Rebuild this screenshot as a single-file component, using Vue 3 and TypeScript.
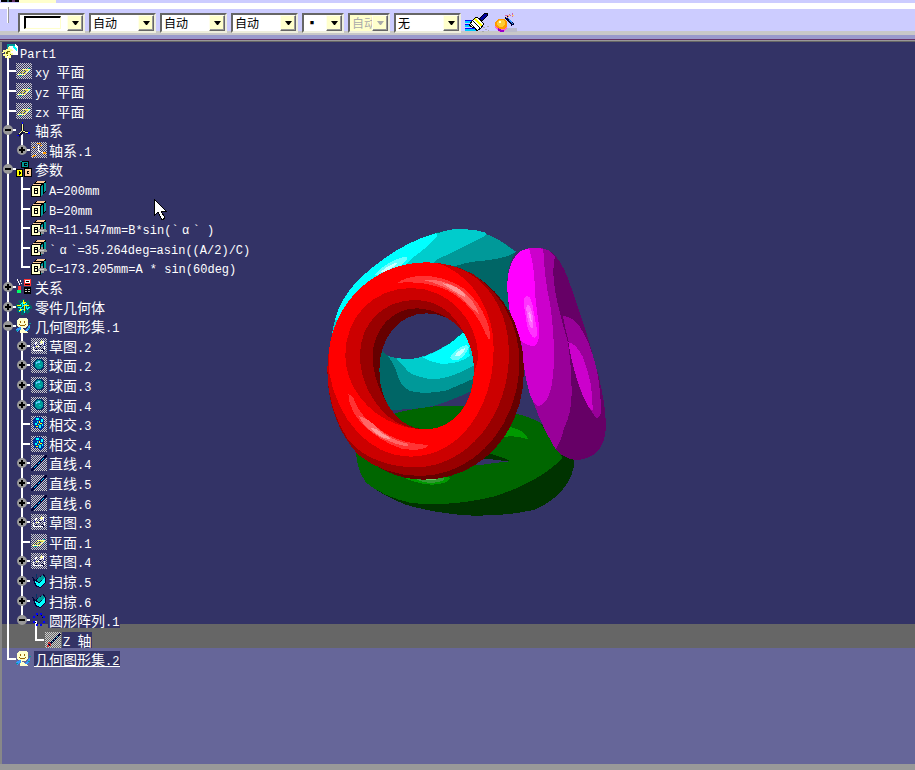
<script setup lang="ts">
interface Shape {
  d: string
  fill?: string
  stroke?: string
  w?: number
}
interface Node {
  depth: number
  icon: string
  text: string
  knob?: 'plus' | 'minus'
  mark?: 'plate' | 'active'
}
interface Combo {
  label: string
  value: string
  kind: 'wide' | 'narrow'
  preview?: boolean
  disabled?: boolean
}

const combos: Combo[] = [
  { label: '填充颜色', value: '', kind: 'wide', preview: true },
  { label: '透明度', value: '自动', kind: 'wide' },
  { label: '线宽', value: '自动', kind: 'wide' },
  { label: '线型', value: '自动', kind: 'wide' },
  { label: '点符号', value: '▪', kind: 'narrow' },
  { label: '渲染样式', value: '自动', kind: 'narrow', disabled: true },
  { label: '图层', value: '无', kind: 'wide' },
]

const nodes: Node[] = [
  { depth: 0, icon: 'part', text: 'Part1' },
  { depth: 1, icon: 'plane', text: 'xy 平面' },
  { depth: 1, icon: 'plane', text: 'yz 平面' },
  { depth: 1, icon: 'plane', text: 'zx 平面' },
  { depth: 1, icon: 'axes', text: '轴系', knob: 'minus' },
  { depth: 2, icon: 'axis', text: '轴系.1', knob: 'plus' },
  { depth: 1, icon: 'params', text: '参数', knob: 'minus' },
  { depth: 2, icon: 'param', text: 'A=200mm' },
  { depth: 2, icon: 'param', text: 'B=20mm' },
  { depth: 2, icon: 'formula', text: 'R=11.547mm=B*sin(`α` )' },
  { depth: 2, icon: 'formula', text: '`α`=35.264deg=asin((A/2)/C)' },
  { depth: 2, icon: 'formula', text: 'C=173.205mm=A * sin(60deg)' },
  { depth: 1, icon: 'relations', text: '关系', knob: 'plus' },
  { depth: 1, icon: 'body', text: '零件几何体', knob: 'plus' },
  { depth: 1, icon: 'set', text: '几何图形集.1', knob: 'minus' },
  { depth: 2, icon: 'sketch', text: '草图.2', knob: 'plus' },
  { depth: 2, icon: 'sphere', text: '球面.2', knob: 'plus' },
  { depth: 2, icon: 'sphere', text: '球面.3', knob: 'plus' },
  { depth: 2, icon: 'sphere', text: '球面.4', knob: 'plus' },
  { depth: 2, icon: 'intersect', text: '相交.3' },
  { depth: 2, icon: 'intersect', text: '相交.4' },
  { depth: 2, icon: 'line', text: '直线.4', knob: 'plus' },
  { depth: 2, icon: 'line', text: '直线.5', knob: 'plus' },
  { depth: 2, icon: 'line', text: '直线.6', knob: 'plus' },
  { depth: 2, icon: 'sketch', text: '草图.3', knob: 'plus' },
  { depth: 2, icon: 'plane', text: '平面.1' },
  { depth: 2, icon: 'sketch', text: '草图.4', knob: 'plus' },
  { depth: 2, icon: 'sweep', text: '扫掠.5', knob: 'plus' },
  { depth: 2, icon: 'sweep', text: '扫掠.6', knob: 'plus' },
  { depth: 2, icon: 'pattern', text: '圆形阵列.1', knob: 'minus', mark: 'plate' },
  { depth: 3, icon: 'zaxis', text: 'Z 轴', mark: 'plate' },
  { depth: 1, icon: 'set', text: '几何图形集.2', mark: 'active' },
]

function guides(index: number): string[] {
  const depth = nodes[index].depth
  const out: string[] = []
  for (let level = 1; level <= depth; level++) {
    const next = nodes.slice(index + 1).find((n) => n.depth <= level)
    const goesOn = next !== undefined && next.depth === level
    if (level === depth) out.push(goesOn ? 'tee' : 'elbow')
    else out.push(goesOn ? 'line' : 'blank')
  }
  return out
}

function hasChildren(index: number): boolean {
  return index + 1 < nodes.length && nodes[index + 1].depth > nodes[index].depth
}

// Splits a label into half-width, full-width Greek and Han runs.
function runs(text: string): { kind: string; text: string }[] {
  return (text.match(/[\u4e00-\u9fff]+|α|[^\u4e00-\u9fffα]+/g) ?? []).map((t) => ({
    text: t,
    kind: t === 'α' ? 'greek' : /[\u4e00-\u9fff]/.test(t) ? 'han' : 'latin',
  }))
}

const hatched = new Set(['plane', 'axis', 'sketch', 'sphere', 'intersect', 'line', 'zaxis'])

const cube: Shape[] = [
  { d: 'M0 5L5 0H15V10L10 16H0Z', fill: '#000' },
  { d: 'M1 4H9L10 3H2ZM4 2H12L13 1H5Z', fill: '#fc9' },
  { d: 'M10 5L12 3V13L10 15ZM13 2H15V9L13 11Z', fill: '#099' },
  { d: 'M2 3H10V4H2ZM6 0H14V1H6Z', fill: '#fc9' },
  { d: 'M1 5H9V15H1Z', fill: '#ffc' },
  { d: 'M3 7H7V8H4V9H6V10H4V12H7V13H3ZM6 8H7V12H6Z', fill: '#000' },
]

const icons: Record<string, Shape[]> = {
  part: [
    { d: 'M6 0H14L16 3V11H6Z', fill: '#fff' },
    { d: 'M5 0H13V2H7V5H5Z', fill: '#099' },
    { d: 'M12 1L15 5V7L10 3Z', fill: '#0ff' },
    { d: 'M4 5H6V3H8V5H10L11 7H9V9H11V11H9V14H7V12H5V14H3V12H1V10H3V8H1V6H4Z', fill: '#ff9' },
    { d: 'M4 8H5V7H8V8H6V10H4ZM8 10H9V11H6V12H5V11H8Z', fill: '#660' },
    { d: 'M0 8H2V9H0ZM6 13H7V15H6Z', fill: '#ff9' },
  ],
  plane: [
    { d: 'M2 11L7 6H14L9 11Z', stroke: '#ff9', w: 1 },
    { d: 'M5 9H7V10H5ZM9 7H12V8H9ZM8 10H10V11H8ZM7 8H9V9H7Z', fill: '#cc3' },
    { d: 'M12 5H14V6H12ZM3 12H6V13H3ZM13 8H14V9H13Z', fill: '#099' },
  ],
  axes: [
    { d: 'M5 2H8V8L13 10V12L7 11L3 15L1 13L5 9Z', fill: '#113' },
    { d: 'M6 2H7V9H6ZM7 9H9V10H7ZM9 10H12V11H9ZM5 9H6V10H5ZM4 10H5V11H4ZM3 11H4V12H3Z', fill: '#ff9' },
    { d: 'M6 0H7V2H6ZM12 10H14V12H12ZM1 13H3V14H1Z', fill: '#00f' },
  ],
  axis: [
    { d: 'M7 3H8V9H7ZM8 9H10V10H8ZM10 10H13V11H10ZM6 10H7V11H6ZM5 11H6V12H5ZM4 12H5V13H4Z', fill: '#fff' },
    { d: 'M6 1H10V2H6ZM9 3H11V4H9ZM2 5H4V6H2ZM12 10H15V12H12ZM2 13H5V14H2ZM1 14H3V15H1Z', fill: '#f90' },
  ],
  params: [
    { d: 'M5 0H13V7H5ZM0 8H7V16H0ZM8 7H16V16H8Z', fill: '#000' },
    { d: 'M6 1H12V6H6ZM4 0H6V1H4Z', fill: '#099' },
    { d: 'M1 9H6V15H1Z', fill: '#ff0' },
    { d: 'M9 8H15V15H9Z', fill: '#fc9' },
    { d: 'M8 2H11V3H9V4H11V5H8ZM3 10H4V11H5V13H4V14H3ZM11 10H13V11H12V12H13V13H11Z', fill: '#000' },
  ],
  param: cube,
  formula: [
    ...cube,
    { d: 'M6 11L8 9H10V7H12V9H14L16 10V12H13V14H10V12H7Z', fill: '#999' },
    { d: 'M8 10H13V11H8Z', fill: '#ccc' },
  ],
  relations: [
    { d: 'M8 0H15V7H8Z', fill: '#f33' },
    { d: 'M9 1H14V4H9Z', fill: '#fff' },
    { d: 'M10 2H13V3H10ZM9 5H14V6H9Z', fill: '#000' },
    { d: 'M8 8H15V15H8Z', fill: '#000' },
    { d: 'M9 10H11V11H9ZM12 10H14V11H12ZM9 12H11V13H9ZM12 12H14V13H12Z', fill: '#ccc' },
    { d: 'M1 0H2V2H1ZM2 2H3V4H2ZM4 1H5V3H4ZM3 4H4V6H3ZM5 4H6V5H5Z', fill: '#fff' },
    { d: 'M2 7H5V11H2Z', fill: '#f33' },
    { d: 'M1 11H5V14H1Z', fill: '#0f6' },
  ],
  body: [
    { d: 'M6 0H9V3L13 1L14 4L12 5L16 7V10L12 10L14 13L11 15L9 12L8 16H5V12L2 14L1 11L3 10L0 8V5L4 5L2 2L4 1L6 3Z', fill: '#066' },
    { d: 'M4 6L7 3L6 8L10 5V10L14 8L11 11M2 8H5L4 12L8 10V14', stroke: '#0ff', w: 1 },
    { d: 'M7 1V5L10 3M1 6L5 7M9 12L8 7L13 6M3 12L6 10', stroke: '#ff0', w: 1 },
  ],
  set: [
    { d: 'M1 2L4 0H10L12 2V8L9 10H4L1 8Z', fill: '#ffc' },
    { d: 'M4 3H5V5H4ZM8 3H9V5H8ZM4 7H9V8H4ZM3 6H4V7H3ZM9 6H10V7H9Z', fill: '#960' },
    { d: 'M0 11L4 9L7 12H10L14 6V10L11 14H7L4 12L1 14Z', fill: '#39f' },
    { d: 'M5 10L12 14V15H4Z', fill: '#ffc' },
    { d: 'M0 12H2V13H0ZM12 10H14V11H12ZM13 5H15V6H13Z', fill: '#099' },
  ],
  sketch: [
    { d: 'M2 12L5 4L8 9L12 3L14 11L9 13Z', stroke: '#fff', w: 1 },
    { d: 'M8 7H10V8H8ZM4 11H6V12H4ZM10 11H13V13H12V12H10Z', fill: '#003' },
    { d: 'M9 4H12V5H9ZM5 8H7V9H5ZM10 2H11V4H10Z', fill: '#ff9' },
    { d: 'M13 4H14V8H13ZM3 6H4V9H3Z', fill: '#339' },
  ],
  sphere: [
    { d: 'M5 2H10L13 5V10L10 13H5L2 10V5Z', fill: '#036' },
    { d: 'M6 3H10L12 6V9L9 12H6L4 9V5Z', fill: '#099' },
    { d: 'M5 5H7V4H9V6H6V7H5Z', fill: '#6cf' },
    { d: 'M8 8H10V9H8Z', fill: '#0cc' },
  ],
  intersect: [
    { d: 'M4 1H11L13 4V11L10 15L7 12H3L2 5Z', fill: '#039' },
    { d: 'M5 2H8V4H5ZM10 3H12V6H10ZM4 7H6V9H4ZM8 9H10V12H8ZM6 5H7V7H6ZM11 8H12V10H11Z', fill: '#0ff' },
    { d: 'M8 5H9V7H8ZM9 7H11V8H9ZM5 10H7V11H5ZM7 8H8V9H7Z', fill: '#ff0' },
  ],
  line: [
    { d: 'M0 16L16 0', stroke: '#003', w: 2 },
    { d: 'M3 12H4V13H3ZM4 11H5V12H4ZM5 10H6V11H5ZM7 8H8V9H7ZM8 7H9V8H8ZM10 5H11V6H10ZM11 4H12V5H11ZM12 3H13V4H12Z', fill: '#0cf' },
  ],
  sweep: [
    { d: 'M1 4L4 7L13 1L15 5V9L9 15L4 13L3 9Z', fill: '#003' },
    { d: 'M5 7L12 2L14 5L8 9Z', fill: '#099' },
    { d: 'M4 8L8 10L14 5V9L9 14L5 12Z', fill: '#0ff' },
    { d: 'M5 1H6V5H5ZM2 4H3V5H2Z', fill: '#036' },
  ],
  pattern: [
    { d: 'M5 1H7V3H5ZM9 1H11V3H9ZM12 4H14V6H12ZM12 9H14V11H12ZM9 12H11V14H9ZM5 12H7V14H5ZM2 9H4V11H2ZM2 4H4V6H2Z', fill: '#00f' },
    { d: 'M6 3H7V4H6ZM10 3H11V4H10ZM11 5H12V6H11ZM4 10H5V11H4ZM6 11H7V12H6Z', fill: '#003' },
  ],
  zaxis: [
    { d: 'M3 14L15 2', stroke: '#003', w: 2 },
    { d: 'M7 9H8V10H7ZM9 7H10V8H9ZM11 5H12V6H11ZM12 4H13V5H12Z', fill: '#6cc' },
    { d: 'M2 13H4V15H2ZM3 10H5V12H3ZM5 11H6V14H5Z', fill: '#c33' },
  ],
}
</script>

<template>
  <main class="page">
    <header>
      <div class="strip"><span class="fragment"></span><span class="tab"></span></div>
      <div class="seam"></div>
      <div class="toolbar">
        <span class="grip"></span>
        <label v-for="c in combos" :key="c.label" class="combo" :class="[c.kind, { off: c.disabled }]">
          <select :aria-label="c.label" :disabled="c.disabled">
            <option>{{ c.value }}</option>
          </select>
          <span v-if="c.preview" class="preview"></span>
          <span class="drop">
            <svg width="7" height="4" viewBox="0 0 7 4"><path d="M0 0H7L4 4H3Z" fill="currentColor" /></svg>
          </span>
        </label>
        <button class="tool" type="button" aria-label="格式刷">
          <svg width="26" height="20" viewBox="0 0 26 20" shape-rendering="crispEdges">
            <path d="M0 7H10M0 11H8M0 15H12" stroke="#00f" stroke-width="1" />
            <path d="M0 9H9M0 13H9M0 17H13" stroke="#0cf" stroke-width="2" />
            <path d="M4 12L8 7L12 4L19 11L16 15L12 18L10 15L7 14Z" fill="#fff" stroke="#000" />
            <path d="M6 11L12 17M8 8L15 15" stroke="#000" />
            <path d="M10 6L17 13" stroke="#ff0" stroke-width="2" />
            <path d="M14 6L20 0H22V3L17 8Z" fill="#009" stroke="#000" />
            <path d="M18 14H20M22 13H24M20 16H22M17 18H19M23 17H24" stroke="#aaa" />
          </svg>
        </button>
        <button class="tool" type="button" aria-label="图形属性向导">
          <svg width="22" height="20" viewBox="0 0 22 20" shape-rendering="crispEdges">
            <path d="M12 15H22V19H8V17Z" fill="#bbc" />
            <path d="M3 7H8L12 10V15L8 19H4L0 15V10Z" fill="#f6c" />
            <path d="M3 6H9L12 9V13L9 16H3L0 13V9Z" fill="#f90" />
            <path d="M4 7H8L10 9V12L7 14H4L2 12V9Z" fill="#fc3" />
            <path d="M4 8H6V10H4Z" fill="#ffc" />
            <path d="M3 16L6 18H9" stroke="#90c" stroke-width="2" fill="none" />
            <path d="M11 4L18 12" stroke="#003" stroke-width="3" />
            <path d="M13 5L18 11" stroke="#39f" />
            <path d="M10 2H13M14 1L16 3M17 0V4M12 5L14 3" stroke="#c6a" />
            <path d="M13 2H15M17 2H19M11 4H12" stroke="#fc6" />
          </svg>
        </button>
      </div>
      <div class="edge"></div>
    </header>

    <section class="viewport">
      <svg class="scene" viewBox="2 42 913 722" preserveAspectRatio="xMinYMin meet" shape-rendering="crispEdges">
        <!-- back torus -->
        <g transform="translate(320 220) scale(0.333333)">
          <path fill="#066" d="M33 380Q35 335 45 300Q60 240 110 185Q165 130 240 85Q300 52 350 38Q400 27 440 28Q490 32 540 62Q570 80 588 95Q562 130 562 190L580 300L470 506Q400 540 340 558Q280 570 213 569L100 480Z" />
          <path fill="#099" d="M300 60L440 28Q490 32 540 62L588 95Q570 112 500 121Q450 124 410 137L320 135Z" />
          <path fill="#0cc" d="M33 380Q35 335 45 300L300 60Q350 36 400 28L440 28Q470 29 498 38Q500 44 492 49Q450 73 350 119L340 132L200 220Z" />
          <path fill="#0ff" d="M45 300Q60 240 110 185Q165 130 240 85Q300 52 348 40Q353 43 350 51Q330 75 285 108L250 140L100 260Q65 300 48 302Z" />
          <path fill="#6ff" d="M162 166Q190 132 240 114Q262 108 262 116L245 135L180 165Z" />
          <path fill="#cff" d="M182 156Q205 135 232 127L225 138L190 158Z" />
          <path fill="#099" d="M204 408Q225 435 234 470Q242 498 270 513Q320 525 380 511L480 468V360L340 380Z" />
          <path fill="#0cc" d="M228 416Q250 435 265 455Q290 473 340 478Q400 475 480 426V350Z" />
          <path fill="#0ff" d="M308 412Q390 380 430 335L480 340L465 372Q440 372 450 408Q420 430 370 432Q335 428 308 412Z" />
          <path fill="#6ff" d="M390 412Q402 388 440 374L446 382Q438 405 415 420Q395 424 390 412Z" />
          <path fill="#cff" d="M405 407Q410 394 436 383Q434 398 418 407Z" />
          <path fill="#336" d="M190 396L205 408Q240 420 290 415Q345 400 390 368Q425 342 450 310V220H220L150 350Z" />
        </g>
        <!-- lower torus -->
        <g transform="translate(340 390) scale(0.333333)">
          <path fill="#030" d="M48 180C48 225 60 250 78 278Q130 318 200 345Q300 373 400 377Q500 378 580 360Q640 337 675 290Q705 250 702 205L600 97Q560 76 500 65Q400 45 330 47Q240 48 150 74Q80 110 48 180Z" />
          <path fill="#060" d="M48 160V180C48 225 60 250 78 278Q130 320 210 338Q260 345 310 342Q390 337 460 320Q540 295 600 258Q645 230 668 202L600 97Q560 76 500 65Q400 45 330 47Q240 48 150 74Q80 110 48 160Z" />
          <path fill="#030" d="M430 187Q475 195 512 214L420 206Z" />
          <path fill="#336" d="M395 226L430 206Q470 208 506 215Q460 218 440 223Z" />
          <path fill="#090" d="M495 108Q555 118 565 149Q530 134 480 142Z" />
          <path fill="#090" d="M175 255Q220 280 275 284Q325 282 330 263L280 255Z" />
          <path fill="#393" d="M220 262Q240 277 275 279Q310 276 315 266L280 255Z" />
          <path fill="#6c6" d="M235 265Q265 276 290 268V255Z" />
        </g>
        <!-- right torus -->
        <g transform="translate(480 230) scale(0.333333)">
          <path fill="#606" d="M82 180Q80 100 118 66Q160 42 205 61Q235 75 262 140Q320 300 345 400Q380 520 377 600Q370 682 295 690Q250 690 222 650Q170 560 145 470Q130 410 125 345Q100 280 88 240Q83 210 82 180Z" />
          <path fill="#909" d="M82 180Q80 100 118 66Q160 42 205 61L225 80Q215 120 225 180Q235 240 262 330Q275 400 275 490Q275 550 252 595Q248 620 228 658L222 650Q170 560 145 470Q130 410 125 345L88 240Z" />
          <path fill="#c0c" d="M82 180Q80 100 118 66Q155 46 190 57Q194 150 210 220Q222 300 222 380Q220 520 176 528Q155 526 140 455Q130 410 125 345L88 240Z" />
          <path fill="#f0f" d="M82 180Q80 100 118 66Q130 55 148 58Q164 110 165 190Q170 240 178 295Q178 348 160 348Q140 348 120 330L88 240Z" />
          <path fill="#f3f" d="M132 225Q130 198 142 198Q155 200 160 240L171 300Q174 323 162 323Q150 318 141 285Z" />
          <path fill="#f6f" d="M139 240Q138 224 147 226Q157 240 160 275Q162 298 154 294Q143 280 139 240Z" />
          <path fill="#f9f" d="M145 249Q150 240 154 265L155 276Q148 270 145 249Z" />
          <path fill="#909" d="M249 258Q275 260 295 283Q330 335 348 410Q362 470 363 545Q360 565 348 563Q325 535 300 475Q280 400 266 335Q256 300 249 258Z" />
          <path fill="#c0c" d="M265 337Q288 340 308 380Q340 460 338 540Q330 545 310 500Q280 430 265 337Z" />
        </g>
        <!-- front torus -->
        <g transform="translate(320 220) scale(0.333333)">
          <path fill="#600" fill-rule="evenodd" d="M22 450C22 265 155 127 320 127C490 127 612 270 612 450C612 640 480 779 310 779C145 779 22 625 22 450ZM178 450C178 550 235 628 318 628C400 628 462 550 462 450C462 355 410 280 320 280C235 280 178 355 178 450Z" />
          <path fill="#900" fill-rule="evenodd" d="M22 450C22 265 155 127 320 127C370 127 420 140 460 163C540 215 598 310 598 425C598 620 460 768 300 768C230 768 165 745 115 705C55 640 22 550 22 450ZM158 410C158 330 215 265 290 265C345 265 400 300 430 335C450 370 462 405 462 450C462 550 400 628 318 628C245 628 210 570 185 520C170 490 158 450 158 410Z" />
          <path fill="#c00" fill-rule="evenodd" d="M22 450C22 265 155 127 320 127C370 127 410 140 440 155C520 200 567 290 567 400C567 590 440 742 285 742C210 742 130 715 85 660C45 600 22 530 22 450ZM120 405C120 310 190 240 285 240C370 240 415 300 440 355C458 390 462 420 462 450C462 550 400 628 318 628C275 628 238 617 205 590C155 545 120 480 120 405Z" />
          <path fill="#f00" fill-rule="evenodd" d="M26 400C40 245 165 127 320 127C345 127 365 132 380 140C460 180 521 270 521 385C521 570 415 710 270 710C150 710 50 600 26 450ZM76 405C76 290 160 204 275 204C385 204 475 300 475 415L462 460C458 555 400 628 318 628C180 628 76 520 76 405Z" />
          <path fill="#f33" d="M231 189Q260 169 310 167Q380 170 430 205Q475 240 500 300Q514 340 508 361Q500 350 480 305Q440 240 380 210Q310 180 231 189Z" />
          <path fill="#f66" d="M304 179Q370 175 420 208Q465 240 478 285Q455 264 435 243Q380 193 304 179Z" />
          <path fill="#f99" d="M368 190Q400 194 418 208Q438 220 436 231Q405 217 368 190Z" />
          <path fill="#f33" d="M85 522Q88 570 125 610Q180 665 245 686Q310 696 327 675Q230 670 175 625Q115 585 100 532Z" />
          <path fill="#f66" d="M117 588Q130 625 190 656Q230 675 263 679L264 671Q215 662 178 629Q145 595 117 588Z" />
          <path fill="#f99" d="M152 623Q170 624 188 642Q205 648 211 657Q175 655 152 623Z" />
        </g>
        <path d="M154 199V216L158 212L162 220L165 218L161 211H166Z" fill="#fff" stroke="#000" stroke-width="1" />
      </svg>

      <svg class="defs" aria-hidden="true">
        <defs>
          <pattern id="hatch" width="2" height="2" patternUnits="userSpaceOnUse">
            <path d="M0 0H1V1H0ZM1 1H2V2H1Z" fill="#ccc" />
          </pattern>
        </defs>
      </svg>

      <ul class="tree" role="tree">
        <li v-for="(n, i) in nodes" :key="i" class="node" role="treeitem" :aria-level="n.depth + 1">
          <span v-for="(g, k) in guides(i)" :key="k" class="guide" :class="g">
            <svg v-if="n.knob && k === n.depth - 1" class="knob" width="10" height="10" viewBox="0 0 10 10">
              <circle cx="5" cy="5" r="5" fill="#999" />
              <path d="M2 5H8" stroke="#000" stroke-width="2" />
              <path v-if="n.knob === 'plus'" d="M5 2V8" stroke="#000" stroke-width="2" />
            </svg>
          </span>
          <span class="picture" :class="{ parent: hasChildren(i), root: n.depth === 0, deep: n.depth > 1 }">
            <svg width="16" height="16" viewBox="0 0 16 16" shape-rendering="crispEdges">
              <rect v-if="hatched.has(n.icon)" width="16" height="16" fill="url(#hatch)" />
              <path
                v-for="(s, k) in icons[n.icon]"
                :key="k"
                :d="s.d"
                :fill="s.fill ?? 'none'"
                :stroke="s.stroke ?? 'none'"
                :stroke-width="s.w ?? 0"
              />
            </svg>
          </span>
          <span class="label" :class="n.mark">
            <span v-for="(r, k) in runs(n.text)" :key="k" :class="r.kind">{{ r.text }}</span>
          </span>
        </li>
      </ul>
    </section>
    <footer class="sill"></footer>
  </main>
</template>

<style>
body {
  margin: 0;
}
</style>

<style scoped>
.page {
  display: flex;
  flex-direction: column;
  min-height: 100vh;
  font-family: "Liberation Mono", "Noto Sans CJK SC", monospace;
}
.strip {
  display: flex;
  height: 3px;
  background: #ccf;
}
.fragment {
  width: 18px;
  margin-left: 1px;
  background: linear-gradient(90deg, #000 6px, #366 6px 8px, #000 8px 11px, #636 11px 14px, #000 14px);
  height: 2px;
}
.tab {
  width: 37px;
  background: #ffc;
}
.seam {
  height: 6px;
  background: #fff;
}
.toolbar {
  display: flex;
  align-items: flex-start;
  gap: 4px;
  height: 22px;
  padding-top: 4px;
  background: linear-gradient(#ccf 22px, #c8c8c8 22px);
}
.grip {
  width: 2px;
  height: 16px;
  margin: -6px 5px 0 7px;
  box-sizing: border-box;
  border-left: 1px solid #fff;
  border-right: 1px solid #999;
}
.combo {
  display: grid;
  width: 67px;
  height: 20px;
  box-sizing: border-box;
  border: 2px solid;
  border-color: #666 #eed #eed #666;
  background: #fff;
}
.combo.narrow {
  width: 42px;
}
.combo.off {
  background: #ffc;
}
.combo > * {
  grid-area: 1 / 1;
}
.combo select {
  appearance: none;
  width: 100%;
  min-width: 0;
  height: 16px;
  padding: 0 16px 0 2px;
  border: 0;
  border-radius: 0;
  outline: 0;
  background: transparent;
  color: #000;
  font: 12px/16px "Noto Sans CJK SC", sans-serif;
}
.combo.narrow select {
  padding-right: 0;
}
.combo.off select {
  color: #aaa;
  opacity: 1;
}
.preview {
  width: 37px;
  height: 13px;
  margin: 1px 0 0 4px;
  box-sizing: border-box;
  border: 2px solid;
  border-width: 2px 1px 1px 2px;
  border-color: #000 #ffc #ffc #000;
  background: #fff;
  pointer-events: none;
}
.drop {
  display: grid;
  place-items: center;
  justify-self: end;
  width: 16px;
  height: 16px;
  box-sizing: border-box;
  border: 1px solid;
  border-color: #ffe #666 #666 #ffe;
  box-shadow: inset -1px -1px #999;
  background: #ffc;
  color: #000;
  pointer-events: none;
}
.combo.off .drop {
  color: #aaa;
}
.tool {
  display: block;
  padding: 0;
  border: 0;
  background: none;
  line-height: 0;
}
.edge {
  height: 11px;
  margin-top: -4px;
  background: linear-gradient(#c8c8c8 4px, #99c 4px 8px, #636 8px 9px, #999 9px 10px, #666 10px);
}
.toolbar {
  position: relative;
  z-index: 1;
  height: 26px;
  box-sizing: border-box;
}
.viewport {
  position: relative;
  flex: 1;
  border-left: 2px solid #888;
  background: linear-gradient(#336 582px, #666 582px 606px, #669 606px);
}
.scene {
  position: absolute;
  inset: 0;
  width: 100%;
  height: 100%;
}
.defs {
  position: absolute;
  width: 0;
  height: 0;
}
.tree {
  position: relative;
  display: grid;
  grid-auto-rows: 19px 20px 20px 19px 20px;
  width: max-content;
  margin: 0;
  padding: 1px 0 0;
  list-style: none;
  color: #fff;
}
.node {
  display: flex;
  align-items: flex-start;
  min-height: 0;
  white-space: pre;
}
.guide {
  position: relative;
  align-self: stretch;
  width: 14px;
}
.guide.line::before,
.guide.tee::before,
.guide.elbow::before {
  content: "";
  position: absolute;
  top: 0;
  bottom: 0;
  left: 5px;
  width: 2px;
  background: #fff;
}
.guide.elbow::before {
  bottom: auto;
  height: 10px;
}
.guide.tee::after,
.guide.elbow::after {
  content: "";
  position: absolute;
  top: 8px;
  right: 0;
  left: 5px;
  height: 2px;
  background: #fff;
}
.knob {
  position: absolute;
  z-index: 1;
  top: 4px;
  left: 1px;
}
.picture {
  position: relative;
  align-self: stretch;
  width: 16px;
  margin-right: 2px;
}
.picture.root {
  width: 15px;
}
.picture svg {
  position: relative;
  display: block;
  margin-top: 1px;
}
.picture.deep svg {
  margin-left: 1px;
}
.picture.parent::before {
  content: "";
  position: absolute;
  top: 10px;
  bottom: 0;
  left: 5px;
  width: 2px;
  background: #fff;
}
.label {
  display: flex;
  align-items: baseline;
  height: 16px;
  margin-top: 1px;
  padding: 0 1px;
  font-size: 12px;
  line-height: 16px;
}
.label::before {
  content: "\200b";
  font-family: "Noto Sans CJK SC", sans-serif;
  font-size: 14px;
}
.label.plate,
.label.active {
  background: #336;
}
.label.active {
  box-shadow: inset 0 -1px #fff;
}
.han {
  font-family: "Noto Sans CJK SC", sans-serif;
  font-size: 14px;
}
.greek {
  width: 14px;
  text-align: center;
}
.sill {
  height: 6px;
  background: #999;
}
</style>
